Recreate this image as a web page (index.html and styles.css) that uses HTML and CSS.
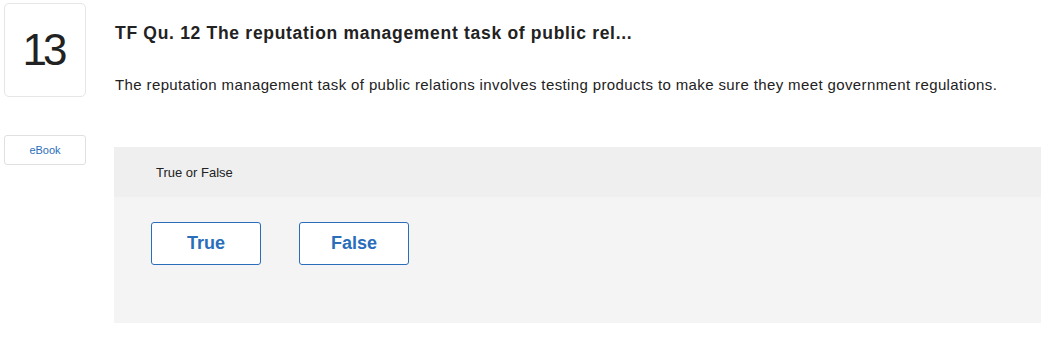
FILE: index.html
```html
<!DOCTYPE html>
<html lang="en">
<head>
  <meta charset="UTF-8">
  <title>Question 13</title>
  <link rel="stylesheet" href="styles.css">
</head>
<body>
  <div class="question">
    <aside class="side">
      <div class="number">13</div>
      <button class="ebook">eBook</button>
    </aside>

    <main class="content">
      <h2 class="title">TF Qu. 12 The reputation management task of public rel...</h2>
      <p class="prompt">The reputation management task of public relations involves testing products to make sure they meet government regulations.</p>

      <div class="answer-panel">
        <div class="panel-head">True or False</div>
        <div class="panel-body">
          <button class="choice">True</button>
          <button class="choice">False</button>
        </div>
      </div>
    </main>
  </div>
</body>
</html>
```

FILE: styles.css
```css
body {
  margin: 0;
  font-family: 'Liberation Sans', Arial, sans-serif;
  background: #fff;
  color: #222;
}
.question {
  display: flex;
  padding-top: 3px;
}
.side {
  width: 82px;
  margin-left: 4px;
  display: flex;
  flex-direction: column;
}
.number {
  height: 92px;
  border: 1px solid #e6e6e6;
  border-radius: 5px;
  display: flex;
  align-items: center;
  justify-content: center;
  font-size: 44px;
  letter-spacing: -4px;
  text-indent: -4px;
  color: #222;
}
.ebook {
  margin-top: 38px;
  height: 30px;
  background: #fff;
  border: 1px solid #e0e0e0;
  border-radius: 3px;
  color: #2a6ebb;
  font-family: inherit;
  font-size: 11px;
  padding: 0;
}
.content {
  flex: 1;
  margin-left: 28px;
}
.title {
  margin: 18px 0 0 1px;
  font-size: 17.5px;
  line-height: 24px;
  letter-spacing: 0.7px;
  font-weight: bold;
  color: #222;
}
.prompt {
  margin: 30px 0 0 1px;
  font-size: 15px;
  line-height: 20px;
  letter-spacing: 0.38px;
  color: #222;
}
.answer-panel {
  margin-top: 52px;
  height: 176px;
  background: #f4f4f4;
}
.panel-head {
  height: 50px;
  background: #efefef;
  display: flex;
  align-items: center;
  padding-left: 42px;
  font-size: 13px;
  color: #222;
}
.panel-body {
  display: flex;
  gap: 38px;
  padding: 25px 0 0 37px;
}
.choice {
  width: 110px;
  height: 43px;
  background: #fff;
  border: 1px solid #2a6ebb;
  border-radius: 3px;
  color: #2a6ebb;
  font-family: inherit;
  font-size: 18px;
  font-weight: bold;
}
```
